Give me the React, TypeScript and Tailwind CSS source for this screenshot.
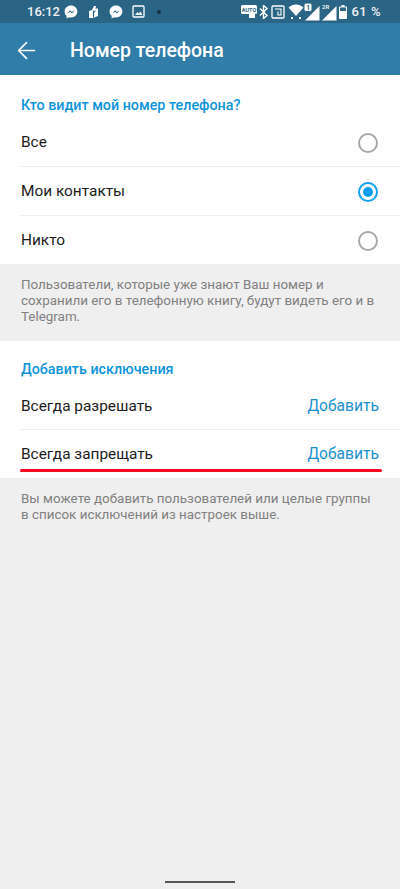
import { ArrowLeft } from 'lucide-react';

const Messenger = () => (
    <svg width="14" height="14" viewBox="0 0 24 24">
        <path d="M12 1C5.900 1 1 5.500 1 11.200c0 3 1.300 5.600 3.500 7.400V23l3.900-2.200c1.100.3 2.300.5 3.600.5 6.100 0 11-4.500 11-10.100S18.100 1 12 1z" fill="#fff" />
        <path d="M5.500 14.500l5-5.500 2.800 2.800L18.500 9l-5 5.500-2.800-2.800z" fill="#2a6482" />
    </svg>
);

const Radio = ({ checked }: { checked?: boolean }) => (
    <div className={`mr-[1px] flex h-5 w-5 items-center justify-center rounded-full border-2 ${checked ? 'border-[#0f9df0]' : 'border-[#a8a8a8]'}`}>
        {checked && <div className="h-[10px] w-[10px] rounded-full bg-[#0f9df0]" />}
    </div>
);

function StatusBar() {
    return (
        <div className="flex h-[23px] items-center justify-between bg-[#2b6585] pl-[27px] pr-[19px] text-[#f2f2f2]">
            <div className="flex items-center">
                <span className="text-[13px] font-medium leading-none">16:12</span>
                <div className="ml-[4px] flex items-center gap-[8px]">
                    <Messenger />
                    <svg width="15" height="14" viewBox="0 0 15 14">
                        <path d="M8 1l2 0-.5 2.500H12V11l-5 2H3V6l3-1z" fill="#fff" />
                        <path d="M7.500 5.500v7M9.500 5.500l-2 3" stroke="#2b6585" strokeWidth="1" fill="none" />
                    </svg>
                    <Messenger />
                    <svg className="ml-[1px]" width="13" height="13" viewBox="0 0 13 13">
                        <rect x="1" y="1" width="11" height="11" rx="1" fill="none" stroke="#fff" strokeWidth="1.300" />
                        <path d="M3 10l2.500-3 1.500 1.500 1.500-2L10.500 10z" fill="#fff" />
                    </svg>
                    <div className="ml-[4px] h-1 w-1 rounded-full bg-[#16303f]" />
                </div>
            </div>
            <div className="flex items-center">
                <svg width="16" height="15" viewBox="0 0 16 15">
                    <rect x="0" y="1" width="16" height="9" rx="1.500" fill="#fff" />
                    <text x="8" y="8" textAnchor="middle" fontSize="5.500" fontWeight="700" fontFamily="Roboto" fill="#2b6585">AUTO</text>
                    <rect x="8" y="10" width="6" height="4" fill="#fff" />
                </svg>
                <svg className="ml-[2px]" width="10" height="14" viewBox="0 0 10 14">
                    <path d="M1 3.500l7 7-3.500 3V.5L8 3.500l-7 7" fill="none" stroke="#fff" strokeWidth="1.400" />
                </svg>
                <svg className="ml-[2px]" width="14" height="14" viewBox="0 0 14 14">
                    <rect x="1" y="1" width="12" height="12" rx="1" fill="none" stroke="#fff" strokeWidth="1.300" />
                    <path d="M4 4h6v6H7V6.500" fill="none" stroke="#fff" strokeWidth="1.100" />
                </svg>
                <svg className="ml-[3px]" width="16" height="15" viewBox="0 0 16 15">
                    <path d="M0.500 3.500C5 -.5 11 -.5 15.500 3.500L8 12z" fill="#fff" />
                    <rect x="3" y="13" width="2" height="2" fill="#fff" />
                    <rect x="11" y="13" width="2" height="2" fill="#fff" />
                </svg>
                <svg width="16" height="18" viewBox="0 0 16 18">
                    <path d="M15.500 3v14.500H1z" fill="#fff" />
                    <rect x="0" y="0" width="8" height="8.500" rx="2" fill="#fff" stroke="#2b6585" />
                    <text x="4" y="7" textAnchor="middle" fontSize="6.500" fontWeight="700" fontFamily="Roboto" fill="#2b6585">1</text>
                </svg>
                <svg className="ml-[1px]" width="16" height="18" viewBox="0 0 16 18">
                    <path d="M15.500 3v14.500H1z" fill="#fff" />
                    <text x="1" y="6" fontSize="6" fontWeight="500" fontFamily="Roboto" fill="#fff">2R</text>
                </svg>
                <svg className="ml-[2px]" width="8" height="14" viewBox="0 0 8 14">
                    <path d="M2.500 0h3v1.500H7a1 1 0 0 1 1 1V13a1 1 0 0 1-1 1H1a1 1 0 0 1-1-1V2.500a1 1 0 0 1 1-1h1.500z" fill="#fff" />
                    <rect x="1" y="2.500" width="6" height="3.500" fill="#2b6585" />
                </svg>
                <span className="ml-[4px] text-[13px] font-medium leading-none tracking-[0.5px]">61 %</span>
            </div>
        </div>
    );
}

function Row({ label, right, divider, tall }: { label: string; right: React.ReactNode; divider?: boolean; tall?: boolean }) {
    return (
        <div className={`ml-[20px] flex items-center justify-between pl-[1px] pr-[21px] pt-[2px] ${tall ? 'h-[49px]' : 'h-[48px]'} ${divider ? 'border-b border-[#eeeeee]' : ''}`}>
            <span className="text-[15.400px] text-[#1c1c1c]">{label}</span>
            {right}
        </div>
    );
}

const AddLink = () => <span className="text-[15.600px] text-[#1a8fcf]">Добавить</span>;

export default function App() {
    return (
        <div className="flex h-[889px] w-[400px] flex-col overflow-hidden bg-[#efefef] font-['Roboto',sans-serif]">
            <StatusBar />
            <div className="flex h-[52px] items-center bg-[#2f7da8] pl-[13px] pt-[3px] text-white">
                <ArrowLeft size={27} strokeWidth={1.5} className="-mt-[1px]" />
                <h1 className="ml-[30px] text-[19.500px] font-medium">Номер телефона</h1>
            </div>
            <div className="h-[2px] bg-white" />

            <div className="bg-white">
                <div className="flex h-[41px] items-center pl-[21px] pt-[17px] text-[14.300px] font-medium text-[#0d94d9]">Кто видит мой номер телефона?</div>
                <Row label="Все" divider tall right={<Radio />} />
                <Row label="Мои контакты" divider tall right={<Radio checked />} />
                <Row label="Никто" right={<Radio />} />
            </div>
            <p className="h-[77px] px-[21px] pt-[13px] text-[13.400px] leading-[16px] text-[#808080]">
                Пользователи, которые уже знают Ваш номер и сохранили его в телефонную книгу, будут видеть его и в Telegram.
            </p>

            <div className="relative bg-white">
                <div className="flex h-[41px] items-center pl-[21px] pt-[17px] text-[14.300px] font-medium text-[#0d94d9]">Добавить исключения</div>
                <Row label="Всегда разрешать" divider right={<AddLink />} />
                <Row label="Всегда запрещать" right={<AddLink />} />
                <div className="absolute bottom-[6px] left-[20px] h-[3px] w-[362px] rounded-full bg-[#ff0a1e]" />
            </div>
            <p className="px-[21px] pt-[13px] text-[13.400px] leading-[16px] text-[#808080]">
                Вы можете добавить пользователей или целые группы в список исключений из настроек выше.
            </p>

            <div className="mt-auto flex justify-center pb-[6px]">
                <div className="h-[2px] w-[70px] bg-[#555555]" />
            </div>
        </div>
    );
}
